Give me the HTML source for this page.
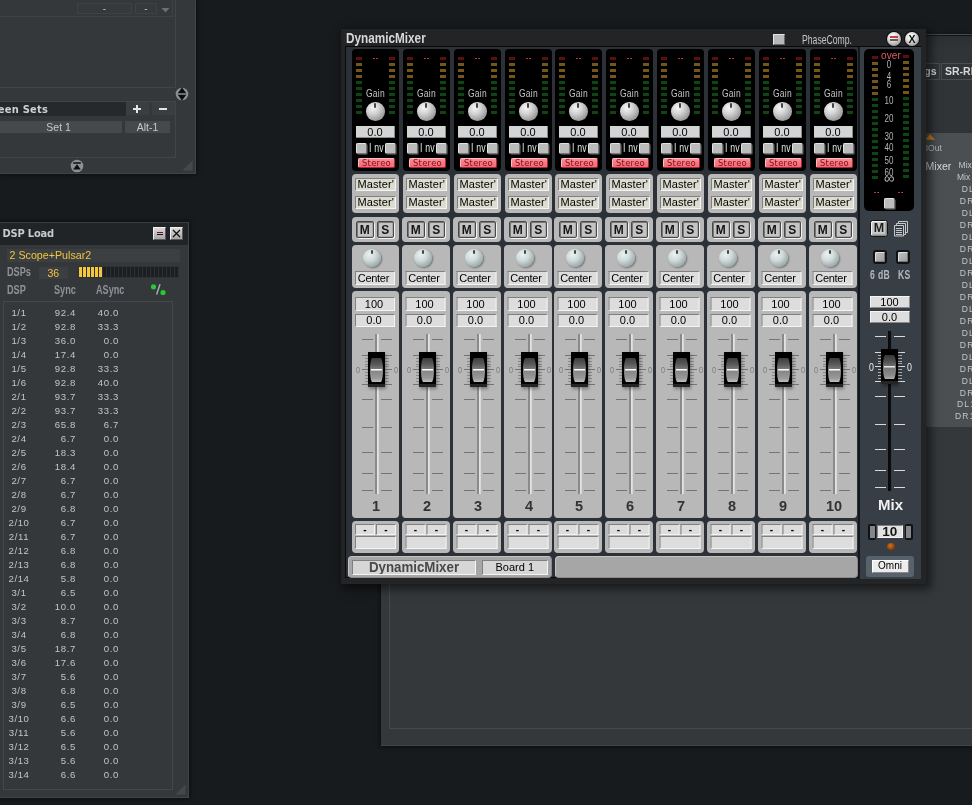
<!DOCTYPE html><html><head><meta charset="utf-8"><title>DynamicMixer</title><style>
*{box-sizing:border-box;margin:0;padding:0}
html,body{width:972px;height:805px;overflow:hidden}
body{background:#181b1e;position:relative;font-family:"Liberation Sans",sans-serif;font-size:11px;color:#c8c8c8}
div,span,i,b{position:absolute;display:block;font-style:normal;font-weight:normal}
#root{left:0;top:0;width:972px;height:805px;will-change:transform}
.gx > .fld{transform:translateX(-.5px)}
.nar{transform-origin:0 50%;transform:scaleX(.8);white-space:nowrap}
/* generic dark panel */
.panel{background:#34383b;box-shadow:0 0 4px 1px rgba(0,0,0,.55);border-right:1px solid #404447;border-bottom:1px solid #404447}
.frame{border:1px solid #414548}
/* ---------- top left ---------- */
#tl{left:0;top:0;width:196px;height:174px}
/* ---------- dsp ---------- */
#dsp{left:0;top:222px;width:189px;height:576px}
#dsp .tbar{left:0;top:-.5px;width:188px;height:23.5px;background:#212427;border-top:1px solid #3a3e41}
#dsp .ttl{left:2.6px;top:4px;font-family:'DejaVu Sans Condensed','DejaVu Sans','Liberation Sans',sans-serif;font-weight:bold;font-size:11px;color:#cacaca;letter-spacing:-.2px;white-space:nowrap}
.wbtn{width:13px;height:13px;background:linear-gradient(180deg,#dadada,#a6a6a6);border:1px solid;border-color:#f0f0f0 #5a5a5a #5a5a5a #f0f0f0}
.drow{left:0;width:180px;height:14px;font-size:9.6px;color:#c4c4c4;line-height:14.4px;letter-spacing:.62px}
.drow span{top:0;height:14px}
.drow .c1{left:0;width:38px;text-align:center}
.drow .c2{left:40px;width:36px;text-align:right}
.drow .c3{left:80px;width:39px;text-align:right}
.meter i{top:1px;width:3px;height:10px}
/* ---------- back ---------- */
#back{left:381px;top:36px;width:600px;height:710px}
/* ---------- mixer ---------- */
#mx{left:342px;top:30px;width:583px;height:553px}
#mx .tb{left:-1px;top:-.7px;width:584.5px;height:554.3px;background:#222426;box-shadow:3px 3px 9px 2px rgba(0,0,0,.55)}
#mx .inner{left:3.4px;top:16.4px;width:576px;height:532px;background:#2b3137;border:1px solid #08090a}
.mtitle{left:4.3px;top:0;font-weight:bold;font-size:14px;line-height:17px;color:#d8d8d8;transform-origin:0 50%;transform:scaleX(.84);white-space:nowrap}
.strip{top:19px;width:47px;height:504px}
.blk{left:0;top:0;width:47px;height:121.5px;background:#000;border-radius:4px}
.led{width:6px;height:3px}
.lr{background:#5c0e10}.ly{background:#72561a}.lg{background:#0d4612}
.dash{width:2px;height:1px;background:#bc3838}
.gain{left:13.5px;top:36.5px;font-size:11.5px;line-height:14px;color:#c4c4c4;transform:scaleX(.74);letter-spacing:.3px}
.knob{border-radius:50%}
.knob i{left:50%;width:2px;margin-left:-1px;top:1px;height:4.5px;background:#444;border-radius:1px}
.k1{left:14px;top:53px;width:18.5px;height:18.5px;background:radial-gradient(circle at 36% 30%,#f6f6f6 0%,#d6d6d6 32%,#a2a2a2 68%,#747474 100%)}
.k2{left:11px;top:3.5px;width:18px;height:18px;background:radial-gradient(circle at 36% 30%,#e9f0f0 0%,#d2dcdc 35%,#a3b0b0 70%,#7b8888 100%);box-shadow:1px 1px 2px rgba(0,0,0,.4)}
.val{left:4px;top:77px;width:39px;height:12px;background:#d2d4d6;color:#000;font-size:11px;line-height:12px;text-align:center;border-right:1px solid #8a8a8a;border-bottom:1px solid #8a8a8a}
.sq{top:94px;width:11px;height:11px;background:#bcbcbc;border:1px solid;border-color:#e2e2e2 #767676 #767676 #e2e2e2;border-radius:2px;box-shadow:1px 1px 0 #3a3a3a}
.inv{left:16.7px;top:91.6px;font-size:12px;line-height:14px;color:#e0e0e0;transform:scaleX(.73);letter-spacing:.25px}
.stereo{left:6px;top:108.5px;width:37px;height:10px;background:linear-gradient(180deg,#fa9098 0,#f47c84 40%,#ee6c76 100%);border:1px solid;border-color:#ffb8bc #b42434 #b42434 #ffb8bc;color:#840a1a;font-family:'DejaVu Sans','Liberation Sans',sans-serif;font-size:8.4px;line-height:8.4px;text-align:center;border-radius:2px;letter-spacing:.3px}
.gbox{left:0;width:47px;background:#b8b8b8;border-radius:4px}
.fld{background:#dddddd;border:1px solid;border-color:#808080 #f4f4f4 #f4f4f4 #808080;color:#000;font-size:11px;text-align:center;white-space:nowrap;overflow:hidden}
.mf{left:3px;width:41px;height:13px;line-height:11px;background:#dddcd0;text-align:left;padding-left:1.5px;letter-spacing:.1px}
.msb{top:4px;width:17.5px;height:17px;border:1px solid #484848;border-radius:2px;background:#c4c4c4;font-weight:bold;font-size:12px;line-height:16px;text-align:center;color:#151515;box-shadow:inset 1px 1px 0 #777,inset -1px -1px 0 #aaa,1px 1px 0 #f2f2f2}
.cf{left:3px;top:26px;width:40px;height:14px;line-height:12px;letter-spacing:-.3px;text-align:left;padding-left:1.8px}
.ff{left:3px;width:40px;height:13.4px;line-height:11.6px;padding-right:2px}
.track{left:23px;top:43px;width:4px;height:160px;background:linear-gradient(90deg,#8a8a8a 0,#8a8a8a 50%,#e6e6e6 55%,#d4d4d4 100%)}
.tk{width:11px;height:1px;background:#747474}
.mt{width:4px;height:1px;background:#8a8a8a}
.zero{top:71.8px;font-size:9.5px;line-height:14px;color:#7c7c7c;transform:scaleX(.78)}
.cap{left:16px;top:61px;width:17px;height:35px;background:#000;box-shadow:1px 2px 3px rgba(0,0,0,.35);border-bottom:3px solid #242424}
.capin{left:2px;top:6px;width:13px;height:24px;clip-path:polygon(15% 0,85% 0,92% 8%,97% 22%,100% 40%,100% 60%,97% 78%,92% 92%,85% 100%,15% 100%,8% 92%,3% 78%,0 60%,0 40%,3% 22%,8% 8%);background:linear-gradient(180deg,#3c3c3c 0%,#585858 25%,#7a7a7a 47%,#858585 53%,#9a9a9a 85%,#c0c0c0 100%)}
.capin i{left:1px;top:11px;width:11px;height:2px;background:linear-gradient(180deg,#fff 0,#fff 50%,#c4c4c4 50%)}
.num{left:.5px;width:47px;top:207px;text-align:center;font-weight:bold;font-size:14.5px;line-height:16px;color:#333}
.sm{top:3px;width:20px;height:10.5px;font-weight:bold;font-size:10px;line-height:10.5px}
.wd{left:3px;top:15px;width:41px;height:13px}
.rt{font-size:8.5px;line-height:12px;color:#c4c6c8;white-space:nowrap;letter-spacing:1.2px}
.sqb{width:12px;height:11px;background:#b8b8b8;border:1px solid;border-color:#e4e4e4 #6a6a6a #6a6a6a #e4e4e4}
.rb{width:14px;height:14px;border-radius:50%;background:radial-gradient(circle at 40% 32%,#ffffff 0,#e0e0e0 35%,#a4a4a4 72%,#6a6a6a 100%);box-shadow:0 0 0 1px #0b0b0c}
.bar{background:#a6a6a6;border-radius:4px;border:1px solid;border-color:#c4c4c4 #8a8a8a #8a8a8a #c4c4c4}
#ms{left:515.5px;top:17px;width:63px;height:531.5px;background:#373e45;border-left:2px solid #15181b}
.mblk{left:4.5px;top:2px;width:49.5px;height:162px;background:#000;border-radius:5px}
.ml{left:7px;width:36px;text-align:center;font-size:10px;line-height:11px;color:#b4b4b4;transform:scaleX(.8)}
.mm{left:10.5px;top:172.5px;width:18px;height:17px;border:1px solid #121416;border-radius:2.5px;background:#c8c8c8;font-weight:bold;font-size:12.5px;line-height:15px;text-align:center;color:#1c1c1c;box-shadow:inset 1px 1px 0 #f2f2f2,inset -1px -1px 0 #8c8c8c,inset -2px -2px 0 #a8a8a8}
.sq2{width:13.5px;height:13.5px;background:linear-gradient(135deg,#c4c4c4,#9a9a9a);border:2px solid #101316;border-radius:3px;box-shadow:inset 1px 1px 0 #dedede,inset -1px -1px 0 #787878}
.tkw{width:11px;height:1px;background:#d8dadc}
.mtw{width:4px;height:1px;background:#b0b4b8}
.gx::before{content:"";position:absolute;left:-.75px;top:0;width:6px;height:100%;background:#b8b8b8;border-radius:4px 0 0 4px}

</style></head><body><div id="root">
<div id="tl" class="panel">
  <div class="frame" style="left:-2px;top:-2px;width:178px;height:90px"></div>
  <div class="frame" style="left:-2px;top:101px;width:178px;height:57px"></div>
  <div style="left:0;top:16px;width:176px;height:1px;background:#3d4144"></div>
  <div style="left:172px;top:0;width:1px;height:16px;background:#3d4144"></div>
    <div class="tlb" style="left:77px;top:3px;width:55px;height:11px;border:1px solid #3e4245;background:#35393c;color:#bdbdbd;font-size:10px;line-height:9px;text-align:center">-</div>
  <div class="tlb" style="left:135px;top:3px;width:22px;height:11px;border:1px solid #3e4245;background:#35393c;color:#bdbdbd;font-size:10px;line-height:9px;text-align:center">-</div>
  <svg style="position:absolute;left:161px;top:7px" width="9" height="6"><path d="M0.5 1h8L4.5 5.5z" fill="#6c7074"/></svg>
  <svg style="position:absolute;left:175px;top:87px" width="14" height="14"><circle cx="7" cy="7" r="6.3" fill="#8c9094"/><path d="M7 0.6l4.3 5.6H2.7zM7 13.4l4.3-5.6H2.7z" fill="#0c0d0e"/></svg>
  <div style="left:0;top:102px;width:125.6px;height:14px;background:#26292c"></div>
  <div style="left:-2.2px;top:102.5px;font-family:'DejaVu Sans Condensed','DejaVu Sans','Liberation Sans',sans-serif;font-weight:bold;font-size:11px;line-height:14px;color:#d0d0d0;white-space:nowrap;letter-spacing:.25px">een Sets</div>
  <div style="left:126px;top:102.4px;width:23.3px;height:13px;background:#3a3e41"></div>
  <div style="left:151.8px;top:102.4px;width:23.6px;height:13px;background:#3a3e41"></div>
  <svg style="position:absolute;left:132px;top:104px" width="10" height="10"><path d="M4 1h2v3h3v2H6v3H4V6H1V4h3z" fill="#e4e4e4"/></svg>
  <svg style="position:absolute;left:158px;top:104px" width="10" height="10"><path d="M1 4h8v2H1z" fill="#e4e4e4"/></svg>
  <div style="left:0;top:121px;width:122px;height:12px;background:#46494c;color:#c8c8c8;font-size:10.5px;line-height:13.4px"><span style="left:46.3px;top:0;white-space:nowrap">Set 1</span></div>
  <div style="left:125px;top:121px;width:45px;height:12px;background:#46494c;color:#c8c8c8;font-size:10.5px;line-height:13.4px;text-align:center">Alt-1</div>
  <svg style="position:absolute;left:70px;top:159px" width="14" height="14"><circle cx="7" cy="7" r="6.3" fill="#8c9094"/><path d="M3.2 3.2h7.6v1.6H3.2zM7 5.3l3.8 5.2H3.2z" fill="#0c0d0e"/></svg>
  <svg style="position:absolute;left:182px;top:160px" width="11" height="11"><path d="M10.5 0.5v10h-10z" fill="#44484b"/></svg>
</div>

<div id="dsp" class="panel">
  <div class="tbar"></div>
  <div class="ttl" style="top:4.7px">DSP Load</div>
  <div class="wbtn" style="left:153px;top:5px"><i style="left:3px;top:4px;width:6px;height:1px;background:#7a1010"></i><i style="left:3px;top:6px;width:6px;height:1px;background:#111"></i></div>
  <div class="wbtn" style="left:170px;top:5px"><svg style="position:absolute;left:1px;top:1px" width="9" height="9"><path d="M1 1l7 7M8 1l-7 7" stroke="#111" stroke-width="1.3"/></svg></div>
  <div style="left:7px;top:27px;width:173px;height:13px;background:#3b3f42;color:#f2c53c;font-size:10.7px;line-height:13.5px;padding-left:2.5px;white-space:nowrap">2 Scope+Pulsar2</div>
  <span class="nar" style="left:7px;top:43px;font-size:12px;line-height:14px;font-weight:bold;color:#8e9296;transform:scaleX(.76)">DSPs</span>
  <div style="left:39px;top:44.5px;width:28.5px;height:12.5px;background:#3b3f42;color:#f2c53c;font-size:10.5px;line-height:12.5px;text-align:center">36</div>
  <div class="meter" style="left:78px;top:44px;width:101px;height:12px;background:#2d3134"><i style="left:1px;background:#f4c83c"></i><i style="left:5px;background:#f4c83c"></i><i style="left:9px;background:#f4c83c"></i><i style="left:13px;background:#f4c83c"></i><i style="left:17px;background:#f4c83c"></i><i style="left:21px;background:#f4c83c"></i><i style="left:25px;background:#1c1f22"></i><i style="left:29px;background:#1c1f22"></i><i style="left:33px;background:#1c1f22"></i><i style="left:37px;background:#1c1f22"></i><i style="left:41px;background:#1c1f22"></i><i style="left:45px;background:#1c1f22"></i><i style="left:49px;background:#1c1f22"></i><i style="left:53px;background:#1c1f22"></i><i style="left:57px;background:#1c1f22"></i><i style="left:61px;background:#1c1f22"></i><i style="left:65px;background:#1c1f22"></i><i style="left:69px;background:#1c1f22"></i><i style="left:73px;background:#1c1f22"></i><i style="left:77px;background:#1c1f22"></i><i style="left:81px;background:#1c1f22"></i><i style="left:85px;background:#1c1f22"></i><i style="left:89px;background:#1c1f22"></i><i style="left:93px;background:#1c1f22"></i><i style="left:97px;background:#1c1f22"></i></div>
  <span class="nar" style="left:7px;top:61px;font-size:12px;line-height:14px;font-weight:bold;color:#8e9296;transform:scaleX(.76)">DSP</span>
  <span class="nar" style="left:53.5px;top:61px;font-size:12px;line-height:14px;font-weight:bold;color:#8e9296;transform:scaleX(.76)">Sync</span>
  <span class="nar" style="left:96px;top:61px;font-size:12px;line-height:14px;font-weight:bold;color:#8e9296;transform:scaleX(.76)">ASync</span>
  <svg style="position:absolute;left:150px;top:61px" width="17" height="14"><circle cx="3.5" cy="3.8" r="2.6" fill="#28c830"/><circle cx="13" cy="9.5" r="2.6" fill="#28c830"/><path d="M10 1.2L6.6 11.5" stroke="#a4a8ac" stroke-width="1.5"/></svg>
  <div class="frame" style="left:3px;top:79px;width:170px;height:488.5px;border-color:#44484b"></div>
  <div class="drow" style="top:83.5px"><span class="c1">1/1</span><span class="c2">92.4</span><span class="c3">40.0</span></div>
<div class="drow" style="top:97.5px"><span class="c1">1/2</span><span class="c2">92.8</span><span class="c3">33.3</span></div>
<div class="drow" style="top:111.5px"><span class="c1">1/3</span><span class="c2">36.0</span><span class="c3">0.0</span></div>
<div class="drow" style="top:125.5px"><span class="c1">1/4</span><span class="c2">17.4</span><span class="c3">0.0</span></div>
<div class="drow" style="top:139.5px"><span class="c1">1/5</span><span class="c2">92.8</span><span class="c3">33.3</span></div>
<div class="drow" style="top:153.5px"><span class="c1">1/6</span><span class="c2">92.8</span><span class="c3">40.0</span></div>
<div class="drow" style="top:167.5px"><span class="c1">2/1</span><span class="c2">93.7</span><span class="c3">33.3</span></div>
<div class="drow" style="top:181.5px"><span class="c1">2/2</span><span class="c2">93.7</span><span class="c3">33.3</span></div>
<div class="drow" style="top:195.5px"><span class="c1">2/3</span><span class="c2">65.8</span><span class="c3">6.7</span></div>
<div class="drow" style="top:209.5px"><span class="c1">2/4</span><span class="c2">6.7</span><span class="c3">0.0</span></div>
<div class="drow" style="top:223.5px"><span class="c1">2/5</span><span class="c2">18.3</span><span class="c3">0.0</span></div>
<div class="drow" style="top:237.5px"><span class="c1">2/6</span><span class="c2">18.4</span><span class="c3">0.0</span></div>
<div class="drow" style="top:251.5px"><span class="c1">2/7</span><span class="c2">6.7</span><span class="c3">0.0</span></div>
<div class="drow" style="top:265.5px"><span class="c1">2/8</span><span class="c2">6.7</span><span class="c3">0.0</span></div>
<div class="drow" style="top:279.5px"><span class="c1">2/9</span><span class="c2">6.8</span><span class="c3">0.0</span></div>
<div class="drow" style="top:293.5px"><span class="c1">2/10</span><span class="c2">6.7</span><span class="c3">0.0</span></div>
<div class="drow" style="top:307.5px"><span class="c1">2/11</span><span class="c2">6.7</span><span class="c3">0.0</span></div>
<div class="drow" style="top:321.5px"><span class="c1">2/12</span><span class="c2">6.8</span><span class="c3">0.0</span></div>
<div class="drow" style="top:335.5px"><span class="c1">2/13</span><span class="c2">6.8</span><span class="c3">0.0</span></div>
<div class="drow" style="top:349.5px"><span class="c1">2/14</span><span class="c2">5.8</span><span class="c3">0.0</span></div>
<div class="drow" style="top:363.5px"><span class="c1">3/1</span><span class="c2">6.5</span><span class="c3">0.0</span></div>
<div class="drow" style="top:377.5px"><span class="c1">3/2</span><span class="c2">10.0</span><span class="c3">0.0</span></div>
<div class="drow" style="top:391.5px"><span class="c1">3/3</span><span class="c2">8.7</span><span class="c3">0.0</span></div>
<div class="drow" style="top:405.5px"><span class="c1">3/4</span><span class="c2">6.8</span><span class="c3">0.0</span></div>
<div class="drow" style="top:419.5px"><span class="c1">3/5</span><span class="c2">18.7</span><span class="c3">0.0</span></div>
<div class="drow" style="top:433.5px"><span class="c1">3/6</span><span class="c2">17.6</span><span class="c3">0.0</span></div>
<div class="drow" style="top:447.5px"><span class="c1">3/7</span><span class="c2">5.6</span><span class="c3">0.0</span></div>
<div class="drow" style="top:461.5px"><span class="c1">3/8</span><span class="c2">6.8</span><span class="c3">0.0</span></div>
<div class="drow" style="top:475.5px"><span class="c1">3/9</span><span class="c2">6.5</span><span class="c3">0.0</span></div>
<div class="drow" style="top:489.5px"><span class="c1">3/10</span><span class="c2">6.6</span><span class="c3">0.0</span></div>
<div class="drow" style="top:503.5px"><span class="c1">3/11</span><span class="c2">5.6</span><span class="c3">0.0</span></div>
<div class="drow" style="top:517.5px"><span class="c1">3/12</span><span class="c2">6.5</span><span class="c3">0.0</span></div>
<div class="drow" style="top:531.5px"><span class="c1">3/13</span><span class="c2">5.6</span><span class="c3">0.0</span></div>
<div class="drow" style="top:545.5px"><span class="c1">3/14</span><span class="c2">6.6</span><span class="c3">0.0</span></div>
  <svg style="position:absolute;left:175px;top:562px" width="11" height="11"><path d="M10.5 0.5v10h-10z" fill="#44484b"/></svg>
</div>

<div id="back" class="panel">
  <div class="frame" style="left:8px;top:-2px;width:600px;height:695px;border-color:#45494c"></div>
</div>
<div id="rp" style="left:925px;top:36px;width:47px;height:710px">
  <div style="left:0;top:0;width:47px;height:97px;background:linear-gradient(180deg,#2b2f32 0,#303437 12px,#303437 100%)"></div>
  <div style="left:-20px;top:27px;width:35px;height:17px;border:1px solid #4a4e51;color:#d8d8d8;font-weight:bold;font-size:10.5px;line-height:15px;text-align:right;padding-right:2.5px">gs</div>
  <div style="left:16px;top:27px;width:60px;height:17px;border:1px solid #4a4e51;color:#d8d8d8;font-weight:bold;font-size:10.5px;line-height:15px;padding-left:3px;white-space:nowrap">SR-RI</div>
  <div style="left:0;top:97px;width:47px;height:294px;background:#4b4f52"></div>
  <svg style="position:absolute;left:0;top:98px" width="10" height="6"><path d="M0 5.8L5 0.3L10 5.8z" fill="#c87818"/></svg>
  <span style="left:.7px;top:107.3px;font-size:8.5px;line-height:11px;color:#b4b7b9;white-space:nowrap">IOut</span>
  <span style="left:.6px;top:123.2px;font-size:10.5px;line-height:14px;color:#dadada;white-space:nowrap">Mixer</span>
<span class="rt" style="top:122.7px;left:33.6px;letter-spacing:0">Mix</span>
<span class="rt" style="top:134.7px;left:32px;letter-spacing:0">Mix</span>
<span class="rt" style="top:146.7px;left:36.7px">DL</span>
<span class="rt" style="top:158.7px;left:34.8px">DR</span>
<span class="rt" style="top:170.7px;left:36.7px">DL</span>
<span class="rt" style="top:182.7px;left:34.8px">DR</span>
<span class="rt" style="top:194.7px;left:36.7px">DL</span>
<span class="rt" style="top:206.7px;left:34.8px">DR</span>
<span class="rt" style="top:218.7px;left:36.7px">DL</span>
<span class="rt" style="top:230.7px;left:34.8px">DR</span>
<span class="rt" style="top:242.7px;left:36.7px">DL</span>
<span class="rt" style="top:254.7px;left:34.8px">DR</span>
<span class="rt" style="top:266.7px;left:36.7px">DL</span>
<span class="rt" style="top:278.7px;left:34.8px">DR</span>
<span class="rt" style="top:290.7px;left:36.7px">DL</span>
<span class="rt" style="top:302.7px;left:34.8px">DR</span>
<span class="rt" style="top:314.7px;left:36.7px">DL</span>
<span class="rt" style="top:326.7px;left:34.8px">DR</span>
<span class="rt" style="top:338.7px;left:36.7px">DL</span>
<span class="rt" style="top:350.7px;left:34.8px">DR</span>
<span class="rt" style="top:361.7px;left:32px">DL1</span>
<span class="rt" style="top:373.7px;left:30px">DR1</span>
</div>

<div id="mx">
  <div class="tb"></div>
  <div class="inner"></div>
  <div class="mtitle">DynamicMixer</div>
  <div class="sqb" style="left:431px;top:4px"></div>
  <span class="nar" style="left:459.5px;top:2px;font-size:13px;line-height:15px;color:#c4c4c4;transform:scaleX(.665)">PhaseComp.</span>
  <div class="rb" style="left:545.3px;top:2px"><i style="left:2.8px;top:4.3px;width:8.2px;height:2px;background:#c44444"></i><i style="left:2.8px;top:7.4px;width:8.2px;height:1.8px;background:#6e5a5a"></i></div>
  <div class="rb" style="left:563px;top:2px"><span style="left:0;top:0;width:14px;text-align:center;font-weight:bold;font-size:10.5px;line-height:14px;color:#111">X</span></div>

<div class="strip" style="left:10px"><div class="blk"><i class="led lr" style="left:4px;top:8px"></i><i class="led ly" style="left:4px;top:14px"></i><i class="led ly" style="left:4px;top:20px"></i><i class="led ly" style="left:4px;top:26px"></i><i class="led lg" style="left:4px;top:32px"></i><i class="led lg" style="left:4px;top:38px"></i><i class="led lg" style="left:4px;top:44px"></i><i class="led lg" style="left:4px;top:50px"></i><i class="led lg" style="left:4px;top:56px"></i><i class="led lg" style="left:4px;top:62px"></i><i class="led lr" style="left:37px;top:8px"></i><i class="led ly" style="left:37px;top:14px"></i><i class="led ly" style="left:37px;top:20px"></i><i class="led ly" style="left:37px;top:26px"></i><i class="led lg" style="left:37px;top:32px"></i><i class="led lg" style="left:37px;top:38px"></i><i class="led lg" style="left:37px;top:44px"></i><i class="led lg" style="left:37px;top:50px"></i><i class="led lg" style="left:37px;top:56px"></i><i class="led lg" style="left:37px;top:62px"></i><i class="dash" style="left:21px;top:9px"></i><i class="dash" style="left:24px;top:9px"></i><span class="gain nar">Gain</span><div class="knob k1"><i></i></div><div class="val">0.0</div><b class="sq" style="left:4px"></b><span class="inv nar">I nv</span><b class="sq" style="left:33px"></b><div class="stereo">Stereo</div></div><div class="gbox" style="top:125px;height:39px"><div class="fld mf" style="top:3.6px">Master'</div><div class="fld mf" style="top:21.5px">Master'</div></div><div class="gbox" style="top:168px;height:25px"><div class="msb" style="left:4px">M</div><div class="msb" style="left:24.5px">S</div></div><div class="gbox" style="top:196px;height:43px"><div class="knob k2"><i></i></div><div class="fld cf">Center</div></div><div class="gbox" style="top:242px;height:226.5px"><div class="fld ff" style="top:6px;height:14px;line-height:13px">100</div><div class="fld ff" style="top:22.5px">0.0</div><div class="track"></div><i class="tk" style="top:48px;left:10px"></i><i class="tk" style="top:48px;left:29px"></i><i class="tk" style="top:64px;left:10px"></i><i class="tk" style="top:64px;left:29px"></i><i class="tk" style="top:78px;left:10px"></i><i class="tk" style="top:78px;left:29px"></i><i class="tk" style="top:93px;left:10px"></i><i class="tk" style="top:93px;left:29px"></i><i class="tk" style="top:108px;left:10px"></i><i class="tk" style="top:108px;left:29px"></i><i class="tk" style="top:136px;left:10px"></i><i class="tk" style="top:136px;left:29px"></i><i class="tk" style="top:161px;left:10px"></i><i class="tk" style="top:161px;left:29px"></i><i class="tk" style="top:182px;left:10px"></i><i class="tk" style="top:182px;left:29px"></i><i class="tk" style="top:199px;left:10px"></i><i class="tk" style="top:199px;left:29px"></i><i class="mt" style="top:67px;left:13px"></i><i class="mt" style="top:67px;left:33px"></i><i class="mt" style="top:70px;left:13px"></i><i class="mt" style="top:70px;left:33px"></i><i class="mt" style="top:73px;left:13px"></i><i class="mt" style="top:73px;left:33px"></i><i class="mt" style="top:75px;left:13px"></i><i class="mt" style="top:75px;left:33px"></i><i class="mt" style="top:81px;left:13px"></i><i class="mt" style="top:81px;left:33px"></i><i class="mt" style="top:84px;left:13px"></i><i class="mt" style="top:84px;left:33px"></i><i class="mt" style="top:87px;left:13px"></i><i class="mt" style="top:87px;left:33px"></i><i class="mt" style="top:90px;left:13px"></i><i class="mt" style="top:90px;left:33px"></i><span class="zero nar" style="left:3.9px">0</span><span class="zero nar" style="left:41.9px">0</span><div class="cap"><div class="capin"><i></i></div></div><div class="num">1</div></div><div class="gbox" style="top:472px;height:31.5px"><div class="fld sm" style="left:3px">-</div><div class="fld sm" style="left:24px">-</div><div class="fld wd"></div></div></div>
<div class="strip" style="left:61px"><div class="blk"><i class="led lr" style="left:4px;top:8px"></i><i class="led ly" style="left:4px;top:14px"></i><i class="led ly" style="left:4px;top:20px"></i><i class="led ly" style="left:4px;top:26px"></i><i class="led lg" style="left:4px;top:32px"></i><i class="led lg" style="left:4px;top:38px"></i><i class="led lg" style="left:4px;top:44px"></i><i class="led lg" style="left:4px;top:50px"></i><i class="led lg" style="left:4px;top:56px"></i><i class="led lg" style="left:4px;top:62px"></i><i class="led lr" style="left:37px;top:8px"></i><i class="led ly" style="left:37px;top:14px"></i><i class="led ly" style="left:37px;top:20px"></i><i class="led ly" style="left:37px;top:26px"></i><i class="led lg" style="left:37px;top:32px"></i><i class="led lg" style="left:37px;top:38px"></i><i class="led lg" style="left:37px;top:44px"></i><i class="led lg" style="left:37px;top:50px"></i><i class="led lg" style="left:37px;top:56px"></i><i class="led lg" style="left:37px;top:62px"></i><i class="dash" style="left:21px;top:9px"></i><i class="dash" style="left:24px;top:9px"></i><span class="gain nar">Gain</span><div class="knob k1"><i></i></div><div class="val">0.0</div><b class="sq" style="left:4px"></b><span class="inv nar">I nv</span><b class="sq" style="left:33px"></b><div class="stereo">Stereo</div></div><div class="gbox" style="top:125px;height:39px"><div class="fld mf" style="top:3.6px">Master'</div><div class="fld mf" style="top:21.5px">Master'</div></div><div class="gbox gx" style="top:168px;height:25px"><div class="msb" style="left:4px">M</div><div class="msb" style="left:24.5px">S</div></div><div class="gbox gx" style="top:196px;height:43px"><div class="knob k2"><i></i></div><div class="fld cf">Center</div></div><div class="gbox gx" style="top:242px;height:226.5px"><div class="fld ff" style="top:6px;height:14px;line-height:13px">100</div><div class="fld ff" style="top:22.5px">0.0</div><div class="track"></div><i class="tk" style="top:48px;left:10px"></i><i class="tk" style="top:48px;left:29px"></i><i class="tk" style="top:64px;left:10px"></i><i class="tk" style="top:64px;left:29px"></i><i class="tk" style="top:78px;left:10px"></i><i class="tk" style="top:78px;left:29px"></i><i class="tk" style="top:93px;left:10px"></i><i class="tk" style="top:93px;left:29px"></i><i class="tk" style="top:108px;left:10px"></i><i class="tk" style="top:108px;left:29px"></i><i class="tk" style="top:136px;left:10px"></i><i class="tk" style="top:136px;left:29px"></i><i class="tk" style="top:161px;left:10px"></i><i class="tk" style="top:161px;left:29px"></i><i class="tk" style="top:182px;left:10px"></i><i class="tk" style="top:182px;left:29px"></i><i class="tk" style="top:199px;left:10px"></i><i class="tk" style="top:199px;left:29px"></i><i class="mt" style="top:67px;left:13px"></i><i class="mt" style="top:67px;left:33px"></i><i class="mt" style="top:70px;left:13px"></i><i class="mt" style="top:70px;left:33px"></i><i class="mt" style="top:73px;left:13px"></i><i class="mt" style="top:73px;left:33px"></i><i class="mt" style="top:75px;left:13px"></i><i class="mt" style="top:75px;left:33px"></i><i class="mt" style="top:81px;left:13px"></i><i class="mt" style="top:81px;left:33px"></i><i class="mt" style="top:84px;left:13px"></i><i class="mt" style="top:84px;left:33px"></i><i class="mt" style="top:87px;left:13px"></i><i class="mt" style="top:87px;left:33px"></i><i class="mt" style="top:90px;left:13px"></i><i class="mt" style="top:90px;left:33px"></i><span class="zero nar" style="left:3.9px">0</span><span class="zero nar" style="left:41.9px">0</span><div class="cap"><div class="capin"><i></i></div></div><div class="num">2</div></div><div class="gbox gx" style="top:472px;height:31.5px"><div class="fld sm" style="left:3px">-</div><div class="fld sm" style="left:24px">-</div><div class="fld wd"></div></div></div>
<div class="strip" style="left:112px"><div class="blk"><i class="led lr" style="left:4px;top:8px"></i><i class="led ly" style="left:4px;top:14px"></i><i class="led ly" style="left:4px;top:20px"></i><i class="led ly" style="left:4px;top:26px"></i><i class="led lg" style="left:4px;top:32px"></i><i class="led lg" style="left:4px;top:38px"></i><i class="led lg" style="left:4px;top:44px"></i><i class="led lg" style="left:4px;top:50px"></i><i class="led lg" style="left:4px;top:56px"></i><i class="led lg" style="left:4px;top:62px"></i><i class="led lr" style="left:37px;top:8px"></i><i class="led ly" style="left:37px;top:14px"></i><i class="led ly" style="left:37px;top:20px"></i><i class="led ly" style="left:37px;top:26px"></i><i class="led lg" style="left:37px;top:32px"></i><i class="led lg" style="left:37px;top:38px"></i><i class="led lg" style="left:37px;top:44px"></i><i class="led lg" style="left:37px;top:50px"></i><i class="led lg" style="left:37px;top:56px"></i><i class="led lg" style="left:37px;top:62px"></i><i class="dash" style="left:21px;top:9px"></i><i class="dash" style="left:24px;top:9px"></i><span class="gain nar">Gain</span><div class="knob k1"><i></i></div><div class="val">0.0</div><b class="sq" style="left:4px"></b><span class="inv nar">I nv</span><b class="sq" style="left:33px"></b><div class="stereo">Stereo</div></div><div class="gbox" style="top:125px;height:39px"><div class="fld mf" style="top:3.6px">Master'</div><div class="fld mf" style="top:21.5px">Master'</div></div><div class="gbox gx" style="top:168px;height:25px"><div class="msb" style="left:4px">M</div><div class="msb" style="left:24.5px">S</div></div><div class="gbox gx" style="top:196px;height:43px"><div class="knob k2"><i></i></div><div class="fld cf">Center</div></div><div class="gbox gx" style="top:242px;height:226.5px"><div class="fld ff" style="top:6px;height:14px;line-height:13px">100</div><div class="fld ff" style="top:22.5px">0.0</div><div class="track"></div><i class="tk" style="top:48px;left:10px"></i><i class="tk" style="top:48px;left:29px"></i><i class="tk" style="top:64px;left:10px"></i><i class="tk" style="top:64px;left:29px"></i><i class="tk" style="top:78px;left:10px"></i><i class="tk" style="top:78px;left:29px"></i><i class="tk" style="top:93px;left:10px"></i><i class="tk" style="top:93px;left:29px"></i><i class="tk" style="top:108px;left:10px"></i><i class="tk" style="top:108px;left:29px"></i><i class="tk" style="top:136px;left:10px"></i><i class="tk" style="top:136px;left:29px"></i><i class="tk" style="top:161px;left:10px"></i><i class="tk" style="top:161px;left:29px"></i><i class="tk" style="top:182px;left:10px"></i><i class="tk" style="top:182px;left:29px"></i><i class="tk" style="top:199px;left:10px"></i><i class="tk" style="top:199px;left:29px"></i><i class="mt" style="top:67px;left:13px"></i><i class="mt" style="top:67px;left:33px"></i><i class="mt" style="top:70px;left:13px"></i><i class="mt" style="top:70px;left:33px"></i><i class="mt" style="top:73px;left:13px"></i><i class="mt" style="top:73px;left:33px"></i><i class="mt" style="top:75px;left:13px"></i><i class="mt" style="top:75px;left:33px"></i><i class="mt" style="top:81px;left:13px"></i><i class="mt" style="top:81px;left:33px"></i><i class="mt" style="top:84px;left:13px"></i><i class="mt" style="top:84px;left:33px"></i><i class="mt" style="top:87px;left:13px"></i><i class="mt" style="top:87px;left:33px"></i><i class="mt" style="top:90px;left:13px"></i><i class="mt" style="top:90px;left:33px"></i><span class="zero nar" style="left:3.9px">0</span><span class="zero nar" style="left:41.9px">0</span><div class="cap"><div class="capin"><i></i></div></div><div class="num">3</div></div><div class="gbox gx" style="top:472px;height:31.5px"><div class="fld sm" style="left:3px">-</div><div class="fld sm" style="left:24px">-</div><div class="fld wd"></div></div></div>
<div class="strip" style="left:163px"><div class="blk"><i class="led lr" style="left:4px;top:8px"></i><i class="led ly" style="left:4px;top:14px"></i><i class="led ly" style="left:4px;top:20px"></i><i class="led ly" style="left:4px;top:26px"></i><i class="led lg" style="left:4px;top:32px"></i><i class="led lg" style="left:4px;top:38px"></i><i class="led lg" style="left:4px;top:44px"></i><i class="led lg" style="left:4px;top:50px"></i><i class="led lg" style="left:4px;top:56px"></i><i class="led lg" style="left:4px;top:62px"></i><i class="led lr" style="left:37px;top:8px"></i><i class="led ly" style="left:37px;top:14px"></i><i class="led ly" style="left:37px;top:20px"></i><i class="led ly" style="left:37px;top:26px"></i><i class="led lg" style="left:37px;top:32px"></i><i class="led lg" style="left:37px;top:38px"></i><i class="led lg" style="left:37px;top:44px"></i><i class="led lg" style="left:37px;top:50px"></i><i class="led lg" style="left:37px;top:56px"></i><i class="led lg" style="left:37px;top:62px"></i><i class="dash" style="left:21px;top:9px"></i><i class="dash" style="left:24px;top:9px"></i><span class="gain nar">Gain</span><div class="knob k1"><i></i></div><div class="val">0.0</div><b class="sq" style="left:4px"></b><span class="inv nar">I nv</span><b class="sq" style="left:33px"></b><div class="stereo">Stereo</div></div><div class="gbox" style="top:125px;height:39px"><div class="fld mf" style="top:3.6px">Master'</div><div class="fld mf" style="top:21.5px">Master'</div></div><div class="gbox gx" style="top:168px;height:25px"><div class="msb" style="left:4px">M</div><div class="msb" style="left:24.5px">S</div></div><div class="gbox gx" style="top:196px;height:43px"><div class="knob k2"><i></i></div><div class="fld cf">Center</div></div><div class="gbox gx" style="top:242px;height:226.5px"><div class="fld ff" style="top:6px;height:14px;line-height:13px">100</div><div class="fld ff" style="top:22.5px">0.0</div><div class="track"></div><i class="tk" style="top:48px;left:10px"></i><i class="tk" style="top:48px;left:29px"></i><i class="tk" style="top:64px;left:10px"></i><i class="tk" style="top:64px;left:29px"></i><i class="tk" style="top:78px;left:10px"></i><i class="tk" style="top:78px;left:29px"></i><i class="tk" style="top:93px;left:10px"></i><i class="tk" style="top:93px;left:29px"></i><i class="tk" style="top:108px;left:10px"></i><i class="tk" style="top:108px;left:29px"></i><i class="tk" style="top:136px;left:10px"></i><i class="tk" style="top:136px;left:29px"></i><i class="tk" style="top:161px;left:10px"></i><i class="tk" style="top:161px;left:29px"></i><i class="tk" style="top:182px;left:10px"></i><i class="tk" style="top:182px;left:29px"></i><i class="tk" style="top:199px;left:10px"></i><i class="tk" style="top:199px;left:29px"></i><i class="mt" style="top:67px;left:13px"></i><i class="mt" style="top:67px;left:33px"></i><i class="mt" style="top:70px;left:13px"></i><i class="mt" style="top:70px;left:33px"></i><i class="mt" style="top:73px;left:13px"></i><i class="mt" style="top:73px;left:33px"></i><i class="mt" style="top:75px;left:13px"></i><i class="mt" style="top:75px;left:33px"></i><i class="mt" style="top:81px;left:13px"></i><i class="mt" style="top:81px;left:33px"></i><i class="mt" style="top:84px;left:13px"></i><i class="mt" style="top:84px;left:33px"></i><i class="mt" style="top:87px;left:13px"></i><i class="mt" style="top:87px;left:33px"></i><i class="mt" style="top:90px;left:13px"></i><i class="mt" style="top:90px;left:33px"></i><span class="zero nar" style="left:3.9px">0</span><span class="zero nar" style="left:41.9px">0</span><div class="cap"><div class="capin"><i></i></div></div><div class="num">4</div></div><div class="gbox gx" style="top:472px;height:31.5px"><div class="fld sm" style="left:3px">-</div><div class="fld sm" style="left:24px">-</div><div class="fld wd"></div></div></div>
<div class="strip" style="left:213px"><div class="blk"><i class="led lr" style="left:4px;top:8px"></i><i class="led ly" style="left:4px;top:14px"></i><i class="led ly" style="left:4px;top:20px"></i><i class="led ly" style="left:4px;top:26px"></i><i class="led lg" style="left:4px;top:32px"></i><i class="led lg" style="left:4px;top:38px"></i><i class="led lg" style="left:4px;top:44px"></i><i class="led lg" style="left:4px;top:50px"></i><i class="led lg" style="left:4px;top:56px"></i><i class="led lg" style="left:4px;top:62px"></i><i class="led lr" style="left:37px;top:8px"></i><i class="led ly" style="left:37px;top:14px"></i><i class="led ly" style="left:37px;top:20px"></i><i class="led ly" style="left:37px;top:26px"></i><i class="led lg" style="left:37px;top:32px"></i><i class="led lg" style="left:37px;top:38px"></i><i class="led lg" style="left:37px;top:44px"></i><i class="led lg" style="left:37px;top:50px"></i><i class="led lg" style="left:37px;top:56px"></i><i class="led lg" style="left:37px;top:62px"></i><i class="dash" style="left:21px;top:9px"></i><i class="dash" style="left:24px;top:9px"></i><span class="gain nar">Gain</span><div class="knob k1"><i></i></div><div class="val">0.0</div><b class="sq" style="left:4px"></b><span class="inv nar">I nv</span><b class="sq" style="left:33px"></b><div class="stereo">Stereo</div></div><div class="gbox" style="top:125px;height:39px"><div class="fld mf" style="top:3.6px">Master'</div><div class="fld mf" style="top:21.5px">Master'</div></div><div class="gbox gx" style="top:168px;height:25px"><div class="msb" style="left:4px">M</div><div class="msb" style="left:24.5px">S</div></div><div class="gbox gx" style="top:196px;height:43px"><div class="knob k2"><i></i></div><div class="fld cf">Center</div></div><div class="gbox gx" style="top:242px;height:226.5px"><div class="fld ff" style="top:6px;height:14px;line-height:13px">100</div><div class="fld ff" style="top:22.5px">0.0</div><div class="track"></div><i class="tk" style="top:48px;left:10px"></i><i class="tk" style="top:48px;left:29px"></i><i class="tk" style="top:64px;left:10px"></i><i class="tk" style="top:64px;left:29px"></i><i class="tk" style="top:78px;left:10px"></i><i class="tk" style="top:78px;left:29px"></i><i class="tk" style="top:93px;left:10px"></i><i class="tk" style="top:93px;left:29px"></i><i class="tk" style="top:108px;left:10px"></i><i class="tk" style="top:108px;left:29px"></i><i class="tk" style="top:136px;left:10px"></i><i class="tk" style="top:136px;left:29px"></i><i class="tk" style="top:161px;left:10px"></i><i class="tk" style="top:161px;left:29px"></i><i class="tk" style="top:182px;left:10px"></i><i class="tk" style="top:182px;left:29px"></i><i class="tk" style="top:199px;left:10px"></i><i class="tk" style="top:199px;left:29px"></i><i class="mt" style="top:67px;left:13px"></i><i class="mt" style="top:67px;left:33px"></i><i class="mt" style="top:70px;left:13px"></i><i class="mt" style="top:70px;left:33px"></i><i class="mt" style="top:73px;left:13px"></i><i class="mt" style="top:73px;left:33px"></i><i class="mt" style="top:75px;left:13px"></i><i class="mt" style="top:75px;left:33px"></i><i class="mt" style="top:81px;left:13px"></i><i class="mt" style="top:81px;left:33px"></i><i class="mt" style="top:84px;left:13px"></i><i class="mt" style="top:84px;left:33px"></i><i class="mt" style="top:87px;left:13px"></i><i class="mt" style="top:87px;left:33px"></i><i class="mt" style="top:90px;left:13px"></i><i class="mt" style="top:90px;left:33px"></i><span class="zero nar" style="left:3.9px">0</span><span class="zero nar" style="left:41.9px">0</span><div class="cap"><div class="capin"><i></i></div></div><div class="num">5</div></div><div class="gbox gx" style="top:472px;height:31.5px"><div class="fld sm" style="left:3px">-</div><div class="fld sm" style="left:24px">-</div><div class="fld wd"></div></div></div>
<div class="strip" style="left:264px"><div class="blk"><i class="led lr" style="left:4px;top:8px"></i><i class="led ly" style="left:4px;top:14px"></i><i class="led ly" style="left:4px;top:20px"></i><i class="led ly" style="left:4px;top:26px"></i><i class="led lg" style="left:4px;top:32px"></i><i class="led lg" style="left:4px;top:38px"></i><i class="led lg" style="left:4px;top:44px"></i><i class="led lg" style="left:4px;top:50px"></i><i class="led lg" style="left:4px;top:56px"></i><i class="led lg" style="left:4px;top:62px"></i><i class="led lr" style="left:37px;top:8px"></i><i class="led ly" style="left:37px;top:14px"></i><i class="led ly" style="left:37px;top:20px"></i><i class="led ly" style="left:37px;top:26px"></i><i class="led lg" style="left:37px;top:32px"></i><i class="led lg" style="left:37px;top:38px"></i><i class="led lg" style="left:37px;top:44px"></i><i class="led lg" style="left:37px;top:50px"></i><i class="led lg" style="left:37px;top:56px"></i><i class="led lg" style="left:37px;top:62px"></i><i class="dash" style="left:21px;top:9px"></i><i class="dash" style="left:24px;top:9px"></i><span class="gain nar">Gain</span><div class="knob k1"><i></i></div><div class="val">0.0</div><b class="sq" style="left:4px"></b><span class="inv nar">I nv</span><b class="sq" style="left:33px"></b><div class="stereo">Stereo</div></div><div class="gbox" style="top:125px;height:39px"><div class="fld mf" style="top:3.6px">Master'</div><div class="fld mf" style="top:21.5px">Master'</div></div><div class="gbox gx" style="top:168px;height:25px"><div class="msb" style="left:4px">M</div><div class="msb" style="left:24.5px">S</div></div><div class="gbox gx" style="top:196px;height:43px"><div class="knob k2"><i></i></div><div class="fld cf">Center</div></div><div class="gbox gx" style="top:242px;height:226.5px"><div class="fld ff" style="top:6px;height:14px;line-height:13px">100</div><div class="fld ff" style="top:22.5px">0.0</div><div class="track"></div><i class="tk" style="top:48px;left:10px"></i><i class="tk" style="top:48px;left:29px"></i><i class="tk" style="top:64px;left:10px"></i><i class="tk" style="top:64px;left:29px"></i><i class="tk" style="top:78px;left:10px"></i><i class="tk" style="top:78px;left:29px"></i><i class="tk" style="top:93px;left:10px"></i><i class="tk" style="top:93px;left:29px"></i><i class="tk" style="top:108px;left:10px"></i><i class="tk" style="top:108px;left:29px"></i><i class="tk" style="top:136px;left:10px"></i><i class="tk" style="top:136px;left:29px"></i><i class="tk" style="top:161px;left:10px"></i><i class="tk" style="top:161px;left:29px"></i><i class="tk" style="top:182px;left:10px"></i><i class="tk" style="top:182px;left:29px"></i><i class="tk" style="top:199px;left:10px"></i><i class="tk" style="top:199px;left:29px"></i><i class="mt" style="top:67px;left:13px"></i><i class="mt" style="top:67px;left:33px"></i><i class="mt" style="top:70px;left:13px"></i><i class="mt" style="top:70px;left:33px"></i><i class="mt" style="top:73px;left:13px"></i><i class="mt" style="top:73px;left:33px"></i><i class="mt" style="top:75px;left:13px"></i><i class="mt" style="top:75px;left:33px"></i><i class="mt" style="top:81px;left:13px"></i><i class="mt" style="top:81px;left:33px"></i><i class="mt" style="top:84px;left:13px"></i><i class="mt" style="top:84px;left:33px"></i><i class="mt" style="top:87px;left:13px"></i><i class="mt" style="top:87px;left:33px"></i><i class="mt" style="top:90px;left:13px"></i><i class="mt" style="top:90px;left:33px"></i><span class="zero nar" style="left:3.9px">0</span><span class="zero nar" style="left:41.9px">0</span><div class="cap"><div class="capin"><i></i></div></div><div class="num">6</div></div><div class="gbox gx" style="top:472px;height:31.5px"><div class="fld sm" style="left:3px">-</div><div class="fld sm" style="left:24px">-</div><div class="fld wd"></div></div></div>
<div class="strip" style="left:315px"><div class="blk"><i class="led lr" style="left:4px;top:8px"></i><i class="led ly" style="left:4px;top:14px"></i><i class="led ly" style="left:4px;top:20px"></i><i class="led ly" style="left:4px;top:26px"></i><i class="led lg" style="left:4px;top:32px"></i><i class="led lg" style="left:4px;top:38px"></i><i class="led lg" style="left:4px;top:44px"></i><i class="led lg" style="left:4px;top:50px"></i><i class="led lg" style="left:4px;top:56px"></i><i class="led lg" style="left:4px;top:62px"></i><i class="led lr" style="left:37px;top:8px"></i><i class="led ly" style="left:37px;top:14px"></i><i class="led ly" style="left:37px;top:20px"></i><i class="led ly" style="left:37px;top:26px"></i><i class="led lg" style="left:37px;top:32px"></i><i class="led lg" style="left:37px;top:38px"></i><i class="led lg" style="left:37px;top:44px"></i><i class="led lg" style="left:37px;top:50px"></i><i class="led lg" style="left:37px;top:56px"></i><i class="led lg" style="left:37px;top:62px"></i><i class="dash" style="left:21px;top:9px"></i><i class="dash" style="left:24px;top:9px"></i><span class="gain nar">Gain</span><div class="knob k1"><i></i></div><div class="val">0.0</div><b class="sq" style="left:4px"></b><span class="inv nar">I nv</span><b class="sq" style="left:33px"></b><div class="stereo">Stereo</div></div><div class="gbox" style="top:125px;height:39px"><div class="fld mf" style="top:3.6px">Master'</div><div class="fld mf" style="top:21.5px">Master'</div></div><div class="gbox gx" style="top:168px;height:25px"><div class="msb" style="left:4px">M</div><div class="msb" style="left:24.5px">S</div></div><div class="gbox gx" style="top:196px;height:43px"><div class="knob k2"><i></i></div><div class="fld cf">Center</div></div><div class="gbox gx" style="top:242px;height:226.5px"><div class="fld ff" style="top:6px;height:14px;line-height:13px">100</div><div class="fld ff" style="top:22.5px">0.0</div><div class="track"></div><i class="tk" style="top:48px;left:10px"></i><i class="tk" style="top:48px;left:29px"></i><i class="tk" style="top:64px;left:10px"></i><i class="tk" style="top:64px;left:29px"></i><i class="tk" style="top:78px;left:10px"></i><i class="tk" style="top:78px;left:29px"></i><i class="tk" style="top:93px;left:10px"></i><i class="tk" style="top:93px;left:29px"></i><i class="tk" style="top:108px;left:10px"></i><i class="tk" style="top:108px;left:29px"></i><i class="tk" style="top:136px;left:10px"></i><i class="tk" style="top:136px;left:29px"></i><i class="tk" style="top:161px;left:10px"></i><i class="tk" style="top:161px;left:29px"></i><i class="tk" style="top:182px;left:10px"></i><i class="tk" style="top:182px;left:29px"></i><i class="tk" style="top:199px;left:10px"></i><i class="tk" style="top:199px;left:29px"></i><i class="mt" style="top:67px;left:13px"></i><i class="mt" style="top:67px;left:33px"></i><i class="mt" style="top:70px;left:13px"></i><i class="mt" style="top:70px;left:33px"></i><i class="mt" style="top:73px;left:13px"></i><i class="mt" style="top:73px;left:33px"></i><i class="mt" style="top:75px;left:13px"></i><i class="mt" style="top:75px;left:33px"></i><i class="mt" style="top:81px;left:13px"></i><i class="mt" style="top:81px;left:33px"></i><i class="mt" style="top:84px;left:13px"></i><i class="mt" style="top:84px;left:33px"></i><i class="mt" style="top:87px;left:13px"></i><i class="mt" style="top:87px;left:33px"></i><i class="mt" style="top:90px;left:13px"></i><i class="mt" style="top:90px;left:33px"></i><span class="zero nar" style="left:3.9px">0</span><span class="zero nar" style="left:41.9px">0</span><div class="cap"><div class="capin"><i></i></div></div><div class="num">7</div></div><div class="gbox gx" style="top:472px;height:31.5px"><div class="fld sm" style="left:3px">-</div><div class="fld sm" style="left:24px">-</div><div class="fld wd"></div></div></div>
<div class="strip" style="left:366px"><div class="blk"><i class="led lr" style="left:4px;top:8px"></i><i class="led ly" style="left:4px;top:14px"></i><i class="led ly" style="left:4px;top:20px"></i><i class="led ly" style="left:4px;top:26px"></i><i class="led lg" style="left:4px;top:32px"></i><i class="led lg" style="left:4px;top:38px"></i><i class="led lg" style="left:4px;top:44px"></i><i class="led lg" style="left:4px;top:50px"></i><i class="led lg" style="left:4px;top:56px"></i><i class="led lg" style="left:4px;top:62px"></i><i class="led lr" style="left:37px;top:8px"></i><i class="led ly" style="left:37px;top:14px"></i><i class="led ly" style="left:37px;top:20px"></i><i class="led ly" style="left:37px;top:26px"></i><i class="led lg" style="left:37px;top:32px"></i><i class="led lg" style="left:37px;top:38px"></i><i class="led lg" style="left:37px;top:44px"></i><i class="led lg" style="left:37px;top:50px"></i><i class="led lg" style="left:37px;top:56px"></i><i class="led lg" style="left:37px;top:62px"></i><i class="dash" style="left:21px;top:9px"></i><i class="dash" style="left:24px;top:9px"></i><span class="gain nar">Gain</span><div class="knob k1"><i></i></div><div class="val">0.0</div><b class="sq" style="left:4px"></b><span class="inv nar">I nv</span><b class="sq" style="left:33px"></b><div class="stereo">Stereo</div></div><div class="gbox" style="top:125px;height:39px"><div class="fld mf" style="top:3.6px">Master'</div><div class="fld mf" style="top:21.5px">Master'</div></div><div class="gbox gx" style="top:168px;height:25px"><div class="msb" style="left:4px">M</div><div class="msb" style="left:24.5px">S</div></div><div class="gbox gx" style="top:196px;height:43px"><div class="knob k2"><i></i></div><div class="fld cf">Center</div></div><div class="gbox gx" style="top:242px;height:226.5px"><div class="fld ff" style="top:6px;height:14px;line-height:13px">100</div><div class="fld ff" style="top:22.5px">0.0</div><div class="track"></div><i class="tk" style="top:48px;left:10px"></i><i class="tk" style="top:48px;left:29px"></i><i class="tk" style="top:64px;left:10px"></i><i class="tk" style="top:64px;left:29px"></i><i class="tk" style="top:78px;left:10px"></i><i class="tk" style="top:78px;left:29px"></i><i class="tk" style="top:93px;left:10px"></i><i class="tk" style="top:93px;left:29px"></i><i class="tk" style="top:108px;left:10px"></i><i class="tk" style="top:108px;left:29px"></i><i class="tk" style="top:136px;left:10px"></i><i class="tk" style="top:136px;left:29px"></i><i class="tk" style="top:161px;left:10px"></i><i class="tk" style="top:161px;left:29px"></i><i class="tk" style="top:182px;left:10px"></i><i class="tk" style="top:182px;left:29px"></i><i class="tk" style="top:199px;left:10px"></i><i class="tk" style="top:199px;left:29px"></i><i class="mt" style="top:67px;left:13px"></i><i class="mt" style="top:67px;left:33px"></i><i class="mt" style="top:70px;left:13px"></i><i class="mt" style="top:70px;left:33px"></i><i class="mt" style="top:73px;left:13px"></i><i class="mt" style="top:73px;left:33px"></i><i class="mt" style="top:75px;left:13px"></i><i class="mt" style="top:75px;left:33px"></i><i class="mt" style="top:81px;left:13px"></i><i class="mt" style="top:81px;left:33px"></i><i class="mt" style="top:84px;left:13px"></i><i class="mt" style="top:84px;left:33px"></i><i class="mt" style="top:87px;left:13px"></i><i class="mt" style="top:87px;left:33px"></i><i class="mt" style="top:90px;left:13px"></i><i class="mt" style="top:90px;left:33px"></i><span class="zero nar" style="left:3.9px">0</span><span class="zero nar" style="left:41.9px">0</span><div class="cap"><div class="capin"><i></i></div></div><div class="num">8</div></div><div class="gbox gx" style="top:472px;height:31.5px"><div class="fld sm" style="left:3px">-</div><div class="fld sm" style="left:24px">-</div><div class="fld wd"></div></div></div>
<div class="strip" style="left:417px"><div class="blk"><i class="led lr" style="left:4px;top:8px"></i><i class="led ly" style="left:4px;top:14px"></i><i class="led ly" style="left:4px;top:20px"></i><i class="led ly" style="left:4px;top:26px"></i><i class="led lg" style="left:4px;top:32px"></i><i class="led lg" style="left:4px;top:38px"></i><i class="led lg" style="left:4px;top:44px"></i><i class="led lg" style="left:4px;top:50px"></i><i class="led lg" style="left:4px;top:56px"></i><i class="led lg" style="left:4px;top:62px"></i><i class="led lr" style="left:37px;top:8px"></i><i class="led ly" style="left:37px;top:14px"></i><i class="led ly" style="left:37px;top:20px"></i><i class="led ly" style="left:37px;top:26px"></i><i class="led lg" style="left:37px;top:32px"></i><i class="led lg" style="left:37px;top:38px"></i><i class="led lg" style="left:37px;top:44px"></i><i class="led lg" style="left:37px;top:50px"></i><i class="led lg" style="left:37px;top:56px"></i><i class="led lg" style="left:37px;top:62px"></i><i class="dash" style="left:21px;top:9px"></i><i class="dash" style="left:24px;top:9px"></i><span class="gain nar">Gain</span><div class="knob k1"><i></i></div><div class="val">0.0</div><b class="sq" style="left:4px"></b><span class="inv nar">I nv</span><b class="sq" style="left:33px"></b><div class="stereo">Stereo</div></div><div class="gbox" style="top:125px;height:39px"><div class="fld mf" style="top:3.6px">Master'</div><div class="fld mf" style="top:21.5px">Master'</div></div><div class="gbox gx" style="top:168px;height:25px"><div class="msb" style="left:4px">M</div><div class="msb" style="left:24.5px">S</div></div><div class="gbox gx" style="top:196px;height:43px"><div class="knob k2"><i></i></div><div class="fld cf">Center</div></div><div class="gbox gx" style="top:242px;height:226.5px"><div class="fld ff" style="top:6px;height:14px;line-height:13px">100</div><div class="fld ff" style="top:22.5px">0.0</div><div class="track"></div><i class="tk" style="top:48px;left:10px"></i><i class="tk" style="top:48px;left:29px"></i><i class="tk" style="top:64px;left:10px"></i><i class="tk" style="top:64px;left:29px"></i><i class="tk" style="top:78px;left:10px"></i><i class="tk" style="top:78px;left:29px"></i><i class="tk" style="top:93px;left:10px"></i><i class="tk" style="top:93px;left:29px"></i><i class="tk" style="top:108px;left:10px"></i><i class="tk" style="top:108px;left:29px"></i><i class="tk" style="top:136px;left:10px"></i><i class="tk" style="top:136px;left:29px"></i><i class="tk" style="top:161px;left:10px"></i><i class="tk" style="top:161px;left:29px"></i><i class="tk" style="top:182px;left:10px"></i><i class="tk" style="top:182px;left:29px"></i><i class="tk" style="top:199px;left:10px"></i><i class="tk" style="top:199px;left:29px"></i><i class="mt" style="top:67px;left:13px"></i><i class="mt" style="top:67px;left:33px"></i><i class="mt" style="top:70px;left:13px"></i><i class="mt" style="top:70px;left:33px"></i><i class="mt" style="top:73px;left:13px"></i><i class="mt" style="top:73px;left:33px"></i><i class="mt" style="top:75px;left:13px"></i><i class="mt" style="top:75px;left:33px"></i><i class="mt" style="top:81px;left:13px"></i><i class="mt" style="top:81px;left:33px"></i><i class="mt" style="top:84px;left:13px"></i><i class="mt" style="top:84px;left:33px"></i><i class="mt" style="top:87px;left:13px"></i><i class="mt" style="top:87px;left:33px"></i><i class="mt" style="top:90px;left:13px"></i><i class="mt" style="top:90px;left:33px"></i><span class="zero nar" style="left:3.9px">0</span><span class="zero nar" style="left:41.9px">0</span><div class="cap"><div class="capin"><i></i></div></div><div class="num">9</div></div><div class="gbox gx" style="top:472px;height:31.5px"><div class="fld sm" style="left:3px">-</div><div class="fld sm" style="left:24px">-</div><div class="fld wd"></div></div></div>
<div class="strip" style="left:468px"><div class="blk"><i class="led lr" style="left:4px;top:8px"></i><i class="led ly" style="left:4px;top:14px"></i><i class="led ly" style="left:4px;top:20px"></i><i class="led ly" style="left:4px;top:26px"></i><i class="led lg" style="left:4px;top:32px"></i><i class="led lg" style="left:4px;top:38px"></i><i class="led lg" style="left:4px;top:44px"></i><i class="led lg" style="left:4px;top:50px"></i><i class="led lg" style="left:4px;top:56px"></i><i class="led lg" style="left:4px;top:62px"></i><i class="led lr" style="left:37px;top:8px"></i><i class="led ly" style="left:37px;top:14px"></i><i class="led ly" style="left:37px;top:20px"></i><i class="led ly" style="left:37px;top:26px"></i><i class="led lg" style="left:37px;top:32px"></i><i class="led lg" style="left:37px;top:38px"></i><i class="led lg" style="left:37px;top:44px"></i><i class="led lg" style="left:37px;top:50px"></i><i class="led lg" style="left:37px;top:56px"></i><i class="led lg" style="left:37px;top:62px"></i><i class="dash" style="left:21px;top:9px"></i><i class="dash" style="left:24px;top:9px"></i><span class="gain nar">Gain</span><div class="knob k1"><i></i></div><div class="val">0.0</div><b class="sq" style="left:4px"></b><span class="inv nar">I nv</span><b class="sq" style="left:33px"></b><div class="stereo">Stereo</div></div><div class="gbox" style="top:125px;height:39px"><div class="fld mf" style="top:3.6px">Master'</div><div class="fld mf" style="top:21.5px">Master'</div></div><div class="gbox gx" style="top:168px;height:25px"><div class="msb" style="left:4px">M</div><div class="msb" style="left:24.5px">S</div></div><div class="gbox gx" style="top:196px;height:43px"><div class="knob k2"><i></i></div><div class="fld cf">Center</div></div><div class="gbox gx" style="top:242px;height:226.5px"><div class="fld ff" style="top:6px;height:14px;line-height:13px">100</div><div class="fld ff" style="top:22.5px">0.0</div><div class="track"></div><i class="tk" style="top:48px;left:10px"></i><i class="tk" style="top:48px;left:29px"></i><i class="tk" style="top:64px;left:10px"></i><i class="tk" style="top:64px;left:29px"></i><i class="tk" style="top:78px;left:10px"></i><i class="tk" style="top:78px;left:29px"></i><i class="tk" style="top:93px;left:10px"></i><i class="tk" style="top:93px;left:29px"></i><i class="tk" style="top:108px;left:10px"></i><i class="tk" style="top:108px;left:29px"></i><i class="tk" style="top:136px;left:10px"></i><i class="tk" style="top:136px;left:29px"></i><i class="tk" style="top:161px;left:10px"></i><i class="tk" style="top:161px;left:29px"></i><i class="tk" style="top:182px;left:10px"></i><i class="tk" style="top:182px;left:29px"></i><i class="tk" style="top:199px;left:10px"></i><i class="tk" style="top:199px;left:29px"></i><i class="mt" style="top:67px;left:13px"></i><i class="mt" style="top:67px;left:33px"></i><i class="mt" style="top:70px;left:13px"></i><i class="mt" style="top:70px;left:33px"></i><i class="mt" style="top:73px;left:13px"></i><i class="mt" style="top:73px;left:33px"></i><i class="mt" style="top:75px;left:13px"></i><i class="mt" style="top:75px;left:33px"></i><i class="mt" style="top:81px;left:13px"></i><i class="mt" style="top:81px;left:33px"></i><i class="mt" style="top:84px;left:13px"></i><i class="mt" style="top:84px;left:33px"></i><i class="mt" style="top:87px;left:13px"></i><i class="mt" style="top:87px;left:33px"></i><i class="mt" style="top:90px;left:13px"></i><i class="mt" style="top:90px;left:33px"></i><span class="zero nar" style="left:3.9px">0</span><span class="zero nar" style="left:41.9px">0</span><div class="cap"><div class="capin"><i></i></div></div><div class="num">10</div></div><div class="gbox gx" style="top:472px;height:31.5px"><div class="fld sm" style="left:3px">-</div><div class="fld sm" style="left:24px">-</div><div class="fld wd"></div></div></div>
  <div class="bar" style="left:5.5px;top:526px;width:204.5px;height:21.5px"></div>
  <div class="fld" style="left:9.5px;top:529.5px;width:124px;height:15px;background:#d6d6d6"><span style="left:0;top:-1px;width:122px;text-align:center;font-weight:bold;font-size:14px;line-height:15px;color:#484848;transform:scaleX(.95);white-space:nowrap">DynamicMixer</span></div>
  <div class="fld" style="left:139.5px;top:529.5px;width:66.5px;height:15px;background:#d6d6d6;font-size:11px;line-height:13px">Board 1</div>
  <div class="bar" style="left:213px;top:526px;width:303px;height:21.5px"></div>
  <div id="ms">
    <div class="mblk">
      <i class="led lr" style="left:8px;top:6.5px"></i><i class="led lr" style="left:39px;top:5.5px"></i><i class="led ly" style="left:8px;top:12.5px"></i><i class="led ly" style="left:39px;top:11.5px"></i><i class="led ly" style="left:8px;top:18.5px"></i><i class="led ly" style="left:39px;top:17.5px"></i><i class="led ly" style="left:8px;top:24.5px"></i><i class="led ly" style="left:39px;top:23.5px"></i><i class="led ly" style="left:8px;top:30.5px"></i><i class="led ly" style="left:39px;top:29.5px"></i><i class="led ly" style="left:8px;top:36.5px"></i><i class="led ly" style="left:39px;top:35.5px"></i><i class="led ly" style="left:8px;top:42.5px"></i><i class="led ly" style="left:39px;top:41.5px"></i><i class="led lg" style="left:8px;top:48.5px"></i><i class="led lg" style="left:39px;top:47.5px"></i><i class="led lg" style="left:8px;top:54.5px"></i><i class="led lg" style="left:39px;top:53.5px"></i><i class="led lg" style="left:8px;top:60.5px"></i><i class="led lg" style="left:39px;top:59.5px"></i><i class="led lg" style="left:8px;top:66.5px"></i><i class="led lg" style="left:39px;top:65.5px"></i><i class="led lg" style="left:8px;top:72.5px"></i><i class="led lg" style="left:39px;top:71.5px"></i><i class="led lg" style="left:8px;top:78.5px"></i><i class="led lg" style="left:39px;top:77.5px"></i><i class="led lg" style="left:8px;top:84.5px"></i><i class="led lg" style="left:39px;top:83.5px"></i><i class="led lg" style="left:8px;top:90.5px"></i><i class="led lg" style="left:39px;top:89.5px"></i><i class="led lg" style="left:8px;top:96.5px"></i><i class="led lg" style="left:39px;top:95.5px"></i><i class="led lg" style="left:8px;top:102.5px"></i><i class="led lg" style="left:39px;top:101.5px"></i><i class="led lg" style="left:8px;top:108.5px"></i><i class="led lg" style="left:39px;top:107.5px"></i><i class="led lg" style="left:8px;top:114.5px"></i><i class="led lg" style="left:39px;top:113.5px"></i><i class="led lg" style="left:8px;top:120.5px"></i><i class="led lg" style="left:39px;top:119.5px"></i><i class="led lg" style="left:8px;top:126.5px"></i><i class="led lg" style="left:39px;top:125.5px"></i>
      <span class="ml" style="top:1.2px;left:9px;color:#e05c66;font-size:10px;transform:none;letter-spacing:.1px">over</span>
      <span class="ml" style="top:10px">0</span>
      <span class="ml" style="top:22px">4</span>
      <span class="ml" style="top:29.5px">6</span>
      <span class="ml" style="top:46px">10</span>
      <span class="ml" style="top:64px">20</span>
      <span class="ml" style="top:82px">30</span>
      <span class="ml" style="top:93px">40</span>
      <span class="ml" style="top:106px">50</span>
      <span class="ml" style="top:117.5px">60</span>
      <span class="ml" style="top:123.6px;font-size:14px;transform:scaleX(1.05)">∞</span>
      <i class="dash" style="left:10px;top:143px"></i><i class="dash" style="left:13px;top:143px"></i>
      <i class="dash" style="left:34px;top:143px"></i><i class="dash" style="left:37px;top:143px"></i>
      <b class="sq" style="left:20px;top:149px"></b>
    </div>
    <div class="mm">M</div>
    <svg style="position:absolute;left:33.9px;top:173.5px" width="16" height="16" fill="none" stroke="#c4c8cc" stroke-width="1"><path d="M5.5 2.5v-2h9v11h-2M3.5 4.5v-2h9v11h-2M1.5 4.5h9v10.5h-9z"/><path d="M3 7.5h6M3 9.5h6M3 11.5h6M3 13.5h6"/></svg>
    <b class="sq2" style="left:13.7px;top:203.2px"></b>
    <b class="sq2" style="left:36.7px;top:203.2px"></b>
    <span class="nar" style="left:10px;top:221px;font-size:12px;line-height:14px;font-weight:bold;color:#b2b7bc;transform:scaleX(.72);letter-spacing:.5px">6 dB</span>
    <span class="nar" style="left:38.5px;top:221px;font-size:12px;line-height:14px;font-weight:bold;color:#b2b7bc;transform:scaleX(.72);letter-spacing:.5px">KS</span>
    <div class="fld" style="left:10px;top:248.5px;width:40px;height:12.5px;line-height:10.5px;border-color:#f4f4f4 #8a8a8a #8a8a8a #f4f4f4">100</div>
    <div class="fld" style="left:10px;top:263.5px;width:40px;height:12.5px;line-height:10.5px;border-color:#f4f4f4 #8a8a8a #8a8a8a #f4f4f4">0.0</div>
    <div style="left:28.5px;top:284px;width:4px;height:160px;background:linear-gradient(90deg,#0a0a0a 0,#0a0a0a 60%,#4a5056 100%)"></div>
    <i class="tkw" style="top:289px;left:15.5px"></i><i class="tkw" style="top:289px;left:34.5px"></i><i class="tkw" style="top:305px;left:15.5px"></i><i class="tkw" style="top:305px;left:34.5px"></i><i class="tkw" style="top:319px;left:15.5px"></i><i class="tkw" style="top:319px;left:34.5px"></i><i class="tkw" style="top:334px;left:15.5px"></i><i class="tkw" style="top:334px;left:34.5px"></i><i class="tkw" style="top:349px;left:15.5px"></i><i class="tkw" style="top:349px;left:34.5px"></i><i class="tkw" style="top:377px;left:15.5px"></i><i class="tkw" style="top:377px;left:34.5px"></i><i class="tkw" style="top:402px;left:15.5px"></i><i class="tkw" style="top:402px;left:34.5px"></i><i class="tkw" style="top:423px;left:15.5px"></i><i class="tkw" style="top:423px;left:34.5px"></i><i class="tkw" style="top:440px;left:15.5px"></i><i class="tkw" style="top:440px;left:34.5px"></i>
    <i class="mtw" style="top:308px;left:18.5px"></i><i class="mtw" style="top:308px;left:38.5px"></i><i class="mtw" style="top:311px;left:18.5px"></i><i class="mtw" style="top:311px;left:38.5px"></i><i class="mtw" style="top:314px;left:18.5px"></i><i class="mtw" style="top:314px;left:38.5px"></i><i class="mtw" style="top:316px;left:18.5px"></i><i class="mtw" style="top:316px;left:38.5px"></i><i class="mtw" style="top:322px;left:18.5px"></i><i class="mtw" style="top:322px;left:38.5px"></i><i class="mtw" style="top:325px;left:18.5px"></i><i class="mtw" style="top:325px;left:38.5px"></i><i class="mtw" style="top:328px;left:18.5px"></i><i class="mtw" style="top:328px;left:38.5px"></i><i class="mtw" style="top:331px;left:18.5px"></i><i class="mtw" style="top:331px;left:38.5px"></i>
    <span class="nar" style="left:9.5px;top:313px;font-size:11px;line-height:14px;color:#f0f0f0">0</span>
    <span class="nar" style="left:47px;top:313px;font-size:11px;line-height:14px;color:#f0f0f0">0</span>
    <div class="cap" style="left:21.5px;top:302px"><div class="capin" style="filter:brightness(.9)"><i></i></div></div>
    <div style="left:0;top:449px;width:62px;text-align:center;font-weight:bold;font-size:15px;line-height:18px;color:#f2f2f2">Mix</div>
    <div style="left:8.3px;top:476.5px;width:8.5px;height:16.5px;background:#83878b;border:2px solid #101214;border-right-width:1.5px;border-radius:2px"></div>
    <div style="left:45px;top:476.5px;width:8.5px;height:16.5px;background:#83878b;border:2px solid #101214;border-left-width:1.5px;border-radius:2px"></div>
    <div class="fld" style="left:17px;top:477.8px;width:26.5px;height:13.5px;font-weight:bold;font-size:13.5px;line-height:12px;color:#151515;background:#e2e2e2">10</div>
    <div style="left:27.5px;top:495.8px;width:7.5px;height:7.5px;border-radius:50%;background:radial-gradient(circle at 42% 38%,#cc7420,#964608 55%,#4a2408 95%)"></div>
    <div style="left:6.5px;top:509px;width:48px;height:20.5px;background:#58626c;border-radius:3px"></div>
    <div class="fld" style="left:12px;top:513px;width:37px;height:12.5px;background:#ececec;font-size:10px;line-height:10.5px;border-color:#fff #888 #888 #fff">Omni</div>
  </div>
</div>

</div></body></html>
